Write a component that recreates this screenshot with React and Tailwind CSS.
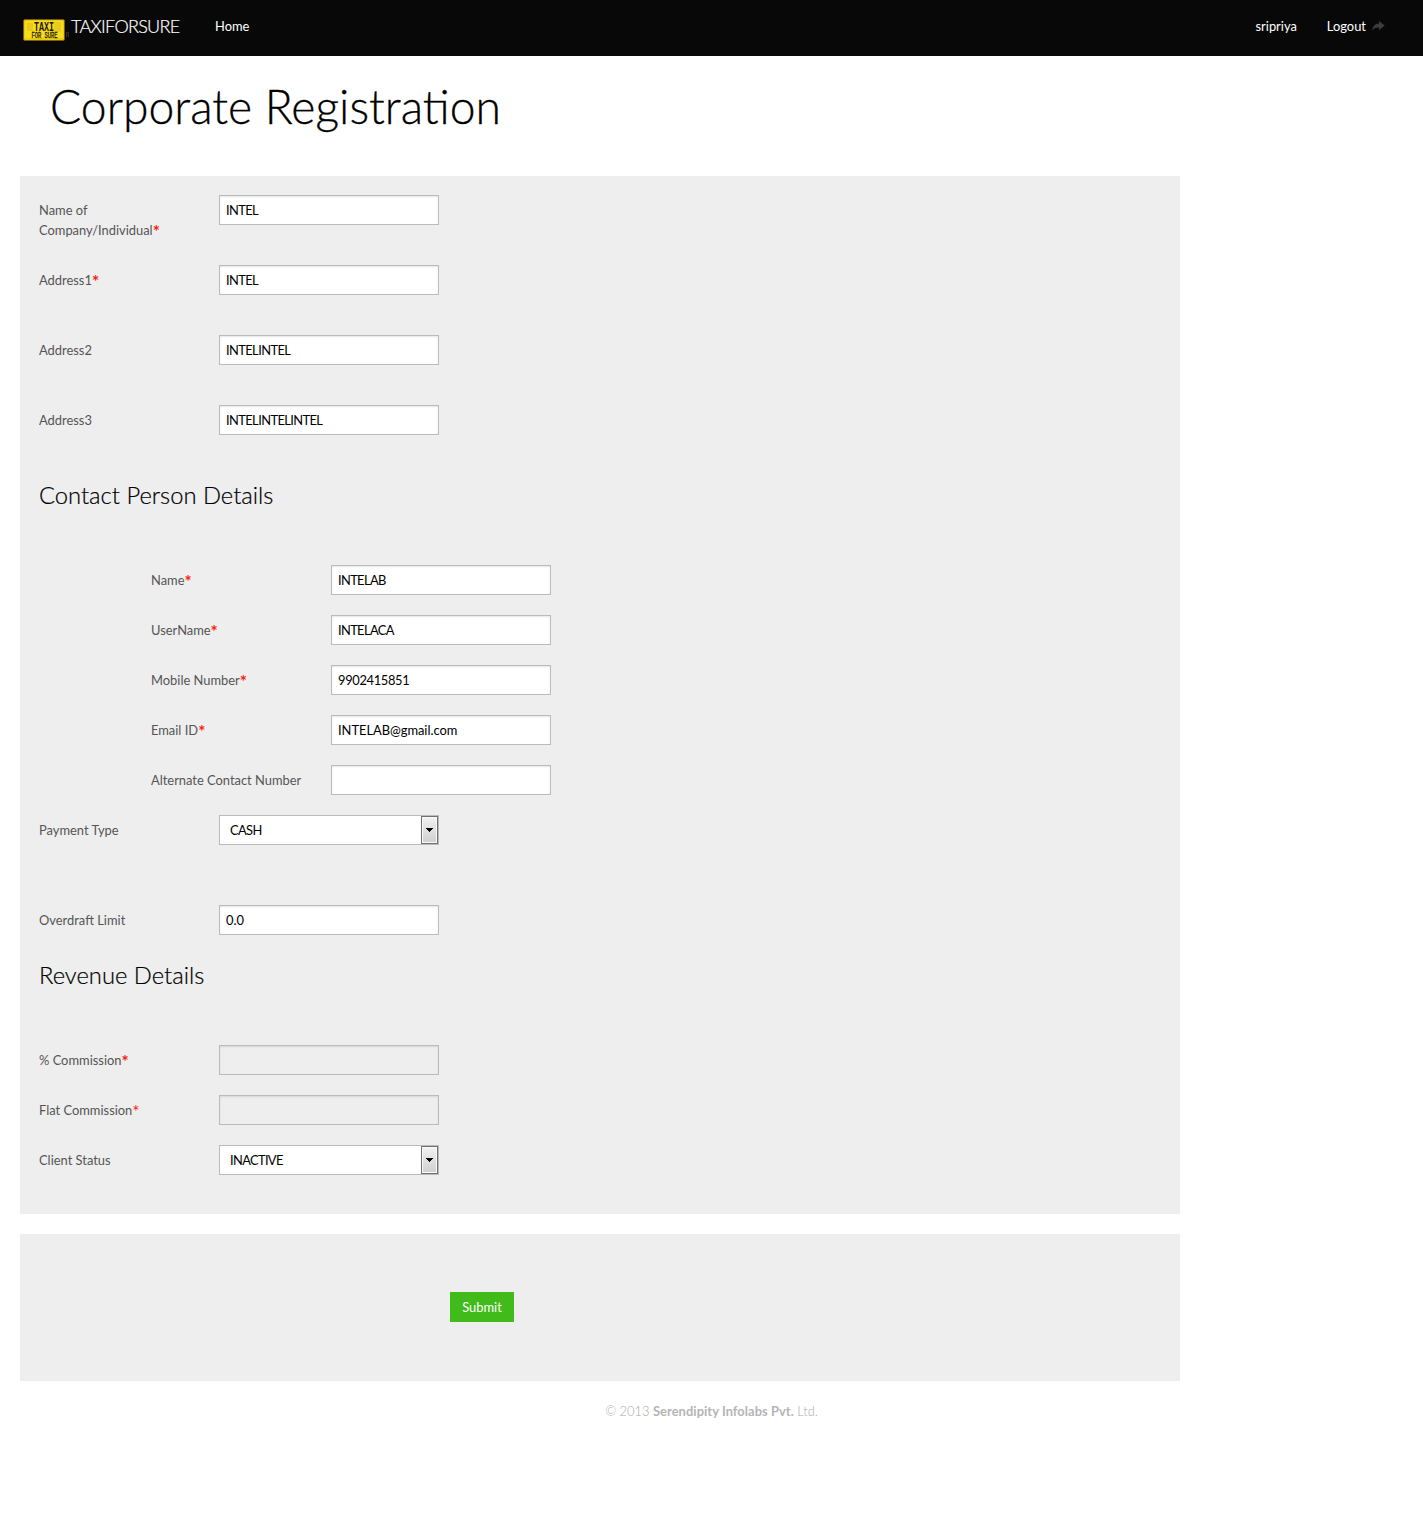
function Required({ light = false }) {
  return (
    <span className={`text-[17px] leading-none text-[#ff1a0d] align-[-3px] ${light ? 'font-normal' : 'font-bold'}`}>*</span>
  );
}

function Row({ label, required, lightMark, size = 'h-[50px]', children }) {
  return (
    <div className={`flex items-start ${size}`}>
      <label className="w-[180px] shrink-0 pt-[5px] pr-5 text-[#555]">
        <span className="block h-5 whitespace-pre">
          {label}
          {required && <Required light={lightMark} />}
        </span>
      </label>
      {children}
    </div>
  );
}

function TextInput({ value = '', disabled = false, tracking = 'tracking-[-0.6px]' }) {
  return (
    <input
      type="text"
      defaultValue={value}
      disabled={disabled}
      className={`block h-[30px] w-[220px] border border-[#bbb] bg-white px-1.5 text-black shadow-[inset_0_1px_2px_rgba(0,0,0,0.1)] outline-none disabled:bg-[#eee] ${tracking}`}
    />
  );
}

function Select({ value }) {
  return (
    <div className="flex h-[30px] w-[220px] items-center justify-between border border-[#bbb] bg-white pl-2.5 text-black">
      <span className="tracking-[-0.65px]">{value}</span>
      <span className="flex h-7 w-[17px] items-center justify-center border border-[#707070] bg-linear-to-b from-[#f2f2f2] to-[#cfcfcf] shadow-[inset_0_0_0_1px_#fafafa]">
        <svg width="7" height="4" viewBox="0 0 7 4" shapeRendering="crispEdges">
          <path d="M0 0h7v1H6v1H5v1H4v1H3V3H2V2H1V1H0z" fill="#000" />
        </svg>
      </span>
    </div>
  );
}

function SectionTitle({ children }) {
  return (
    <h2 className="h-[90px] text-[23.75px] leading-10 font-light text-black [-webkit-text-stroke:0.2px_black]">
      {children}
    </h2>
  );
}

function Logo() {
  return (
    <svg width="48" height="28" viewBox="0 0 48 28" className="mt-2 shrink-0 overflow-visible">
      <rect x="0.5" y="3.5" width="41" height="21" rx="1.5" fill="#e9cb12" stroke="#7a5c14" />
      <rect x="2" y="5" width="38" height="17" fill="#f6dc1c" />
      <path d="M4 7h6v8H4zM31 6h7v10h-7z" fill="#d9b91c" opacity="0.5" />
      <text x="11" y="14.5" textLength="20" lengthAdjust="spacingAndGlyphs" fontFamily="Liberation Mono, monospace" fontWeight="700" fontSize="13.5" fill="#1c1703">TAXI</text>
      <text x="8.5" y="22" textLength="26" lengthAdjust="spacingAndGlyphs" fontFamily="Liberation Mono, monospace" fontSize="9" fill="#1c1703" stroke="#1c1703" strokeWidth="0.3">FOR SURE</text>
      <path d="M43 16.5h3M43.5 16.5v5M45.5 16.5v5M43 19h3" stroke="#2a2a2a" fill="none" />
    </svg>
  );
}

function ShareArrow() {
  return (
    <svg width="13" height="10" viewBox="0 0 13 10" className="shrink-0">
      <path d="M7 0L12.7 4.6L7 9.2V6.6C4 6.4 1.8 7.2 0.2 9.8C0.6 5.6 3 2.8 7 2.6Z" fill="#3c3c3c" />
    </svg>
  );
}

export default function App() {
  return (
    <div className="min-h-[1531px] bg-white font-['Lato',sans-serif] text-[12.9px] leading-5">
      <header className="flex h-14 items-center bg-[#080808] pr-[38px] pb-1 pl-[23px] text-white">
        <Logo />
        <span className="w-[144px] text-[18px] font-light tracking-[-0.7px] [-webkit-text-stroke:0.2px_white]">TAXIFORSURE</span>
        <a>Home</a>
        <a className="ml-auto">sripriya</a>
        <a className="mr-1.5 ml-[30px]">Logout</a>
        <ShareArrow />
      </header>

      <h1 className="h-[120px] px-[50px] pt-[22px] text-[46.25px] leading-[56px] font-light text-black [-webkit-text-stroke:0.3px_black]">
        Corporate Registration
      </h1>

      <main className="ml-5 w-[1160px]">
        <section className="h-[1038px] bg-[#eee] p-[19px]">
          <Row label={'Name of\nCompany/Individual'} required size="h-[70px]"><TextInput value="INTEL" /></Row>
          <Row label="Address1" required size="h-[70px]"><TextInput value="INTEL" /></Row>
          <Row label="Address2" size="h-[70px]"><TextInput value="INTELINTEL" /></Row>
          <Row label="Address3" size="h-[70px]"><TextInput value="INTELINTELINTEL" /></Row>

          <SectionTitle>Contact Person Details</SectionTitle>
          <div className="pl-28">
            <Row label="Name" required><TextInput value="INTELAB" tracking="tracking-[-0.65px]" /></Row>
            <Row label="UserName" required><TextInput value="INTELACA" tracking="tracking-[-0.65px]" /></Row>
            <Row label="Mobile Number" required><TextInput value="9902415851" tracking="tracking-[-0.35px]" /></Row>
            <Row label="Email ID" required><TextInput value="INTELAB@gmail.com" tracking="tracking-[-0.03px]" /></Row>
            <Row label="Alternate Contact Number"><TextInput /></Row>
          </div>
          <Row label="Payment Type" size="h-[90px]"><Select value="CASH" /></Row>
          <Row label="Overdraft Limit"><TextInput value="0.0" tracking="tracking-normal" /></Row>

          <SectionTitle>Revenue Details</SectionTitle>
          <Row label="% Commission" required><TextInput disabled /></Row>
          <Row label="Flat Commission" required lightMark><TextInput disabled /></Row>
          <Row label="Client Status"><Select value="INACTIVE" /></Row>
        </section>

        <section className="mt-5 h-[147px] bg-[#eee] pt-[58px] pl-[430px]">
          <button className="h-[30px] w-16 bg-[#41bb19] text-white">Submit</button>
        </section>
      </main>

      <footer className="pt-5 text-center font-light text-[#aaa]">
        © 2013 <strong className="font-bold tracking-[0.05px] text-[#b5b5b5]">Serendipity Infolabs Pvt.</strong> Ltd.
      </footer>
    </div>
  );
}
